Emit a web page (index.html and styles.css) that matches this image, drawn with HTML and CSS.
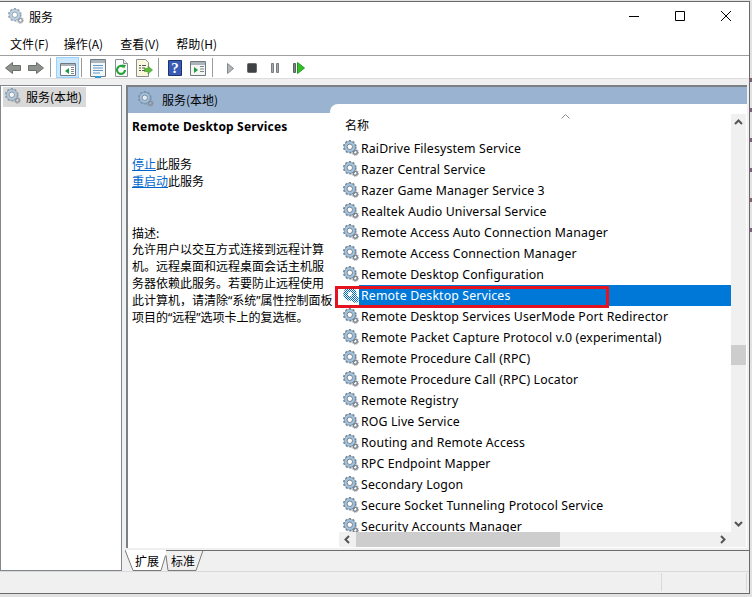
FILE: index.html
```html
<!DOCTYPE html>
<html lang="zh">
<head>
<meta charset="utf-8">
<title>服务</title>
<link rel="stylesheet" href="styles.css">
</head>
<body>
<svg class="defs" width="0" height="0" aria-hidden="true">
  <defs>
    <pattern id="dither" width="2" height="2" patternUnits="userSpaceOnUse">
      <rect width="2" height="2" fill="#ffffff"/>
      <rect width="1" height="1" fill="#0068c4"/>
      <rect x="1" y="1" width="1" height="1" fill="#0068c4"/>
    </pattern>
    <symbol id="gear" viewBox="0 0 16 16">
      <g fill="none">
        <circle cx="12.300" cy="12.300" r="2" stroke="#7f868e" stroke-width="1.500"/>
        <circle cx="12.300" cy="12.300" r="3.200" stroke="#8f959c" stroke-width="1" stroke-dasharray="1.200 1.200"/>
        <circle cx="6.800" cy="6.800" r="6" stroke="#6f8599" stroke-width="1.600" stroke-dasharray="2.100 1.700"/>
        <circle cx="6.800" cy="6.800" r="4.100" fill="#fff" stroke="#a4c3de" stroke-width="2.600"/>
        <circle cx="6.800" cy="6.800" r="5.500" stroke="#6f8599" stroke-width=".7"/>
        <circle cx="6.800" cy="6.800" r="2.700" stroke="#5a6875" stroke-width=".8"/>
      </g>
    </symbol>
    <symbol id="gear-selected" viewBox="0 0 16 16">
      <circle cx="7" cy="7" r="6.800" fill="url(#dither)"/>
      <circle cx="12.300" cy="12.300" r="3.400" fill="url(#dither)"/>
      <circle cx="7" cy="7" r="2.200" fill="#fff"/>
    </symbol>
  </defs>
</svg>
<div class="window">
  <header class="titlebar">
    <svg class="icon16 pale"><use href="#gear"/></svg>
    <span class="title">服务</span>
    <div class="caption">
      <svg class="cap-btn" viewBox="0 2 46 30"><path d="M18 16.500h10" stroke="#000" fill="none"/></svg>
      <svg class="cap-btn" viewBox="0 2 46 30"><path d="M18.500 11.500h9v9h-9z" stroke="#000" fill="none"/></svg>
      <svg class="cap-btn" viewBox="0 2 46 30"><path d="M18 11l10 10M28 11l-10 10" stroke="#000" fill="none"/></svg>
    </div>
  </header>
  <nav class="menubar">
    <span>文件(F)</span><span>操作(A)</span><span>查看(V)</span><span>帮助(H)</span>
  </nav>
  <div class="toolbar">
    <svg class="tool" viewBox="0 -1 23 22"><path d="M3.500 11l7-5.500v3h8v5h-8v3z" fill="#8f938f" stroke="#6b6f6b"/></svg>
    <svg class="tool" viewBox="0 -1 23 22"><path d="M18.500 11l-7-5.500v3h-8v5h8v3z" fill="#8f938f" stroke="#6b6f6b"/></svg>
    <i class="sep"></i>
    <span class="tool-on">
      <svg class="tool-inner" viewBox="0 0 21 20"><path d="M3.500 5.500h15v12h-15z" fill="#fff" stroke="#6f7a80"/><path d="M4 6h14v2H4z" fill="#aab4ba"/><path d="M14 9.500h3M14 11.500h3M14 13.500h3M14 15.500h3" stroke="#7d868c"/><path d="M12 10v6l-4-3z" fill="#1f9a3a"/></svg>
    </span>
    <i class="sep"></i>
    <svg class="tool" viewBox="0 -1 23 22"><path d="M3.500 2.500h15v17h-15z" fill="#f4f6f8" stroke="#6f7a80"/><path d="M4 3h14v3H4z" fill="#aab4ba"/><path d="M6 8.500h10M6 11h10M6 13.500h10M6 16h7" stroke="#5f9ac9"/><path d="M8 20h6" stroke="#2a9ad8" stroke-width="2"/></svg>
    <svg class="tool" viewBox="0 -1 23 22"><path d="M5.500 2.500h8l4 4v13h-12z" fill="#fafafa" stroke="#8a8f94"/><path d="M13.500 2.500v4h4" fill="#e8e8e8" stroke="#8a8f94"/><path d="M15 13a4 4 0 1 1-1.500-3.200" fill="none" stroke="#26a33c" stroke-width="2.200"/><path d="M12 7.500l4 .5-2 3.500z" fill="#26a33c"/></svg>
    <svg class="tool" viewBox="0 -1 23 22"><path d="M3.500 2.500h9l3 3v14h-12z" fill="#fbf7dc" stroke="#8a8f94"/><path d="M6 8.500h2M6 11h2M6 13.500h2M9 8.500h4M9 11h3M9 13.500h3" stroke="#50565c"/><path d="M11.500 11.500h3.500V9l4.500 4-4.500 4v-2.500h-3.500z" fill="#5dbb3b" stroke="#3c8f24" stroke-width=".6"/></svg>
    <i class="sep"></i>
    <svg class="tool" viewBox="0 -1 23 22"><path d="M4.500 3.500h13v15h-13z" fill="#3a5bb5" stroke="#1e326f"/><text x="11" y="16" class="help-mark">?</text></svg>
    <svg class="tool" viewBox="0 -1 23 22"><path d="M3.500 4.500h15v14h-15z" fill="#f3f6f2" stroke="#6f7a80"/><path d="M4 5h14v3H4z" fill="#aab4ba"/><path d="M13 9.500h4M13 12h4M13 14.500h4" stroke="#7d868c"/><path d="M7 10v6l4-3z" fill="#1f9a3a"/></svg>
    <i class="sep"></i>
    <svg class="tool" viewBox="0 -1 23 22"><path d="M9.500 6.500v10l6-5z" fill="#b4b7b9" stroke="#85898c"/></svg>
    <svg class="tool" viewBox="0 -1 23 22"><rect x="6.500" y="6.500" width="9" height="9" rx="1" fill="#3f4143" stroke="#67696b"/></svg>
    <svg class="tool" viewBox="0 -1 23 22"><path d="M7.500 6.500h2v9h-2zM12.500 6.500h2v9h-2z" fill="#a6a9ab" stroke="#7b7e80"/></svg>
    <svg class="tool" viewBox="0 -1 23 22"><path d="M6.500 6.500h2v9h-2z" fill="#7f8386" stroke="#5c6062"/><path d="M10.500 5.500v11l7-5.500z" fill="#35c02a" stroke="#209a1c"/></svg>
  </div>

  <main class="workspace">
    <aside class="tree">
      <div class="tree-item">
        <svg class="icon16 pale"><use href="#gear"/></svg>
        <span>服务(本地)</span>
      </div>
    </aside>
    <section class="panel">
      <div class="panel-body">
        <div class="panel-head">
          <svg class="icon16 pale"><use href="#gear"/></svg>
          <span>服务(本地)</span>
        </div>
        <div class="panel-split">
          <div class="details">
            <h2>Remote Desktop Services</h2>
            <p class="actions"><a href="#">停止</a>此服务<br><a href="#">重启动</a>此服务</p>
            <p class="desc-label">描述:</p>
            <p class="desc">允许用户以交互方式连接到远程计算机。远程桌面和远程桌面会话主机服务器依赖此服务。若要防止远程使用此计算机，请清除“系统”属性控制面板项目的“远程”选项卡上的复选框。</p>
          </div>
          <div class="listview">
            <div class="list-main">
              <div class="list-head">
                <span class="col-name">名称</span>
                <svg class="sort" viewBox="0 0 9 5"><path d="M.5 4.500l4-4 4 4" fill="none" stroke="#8c8c8c"/></svg>
              </div>
              <ul class="rows">
                <li><svg class="icon16"><use href="#gear"/></svg><span>RaiDrive Filesystem Service</span></li>
                <li><svg class="icon16"><use href="#gear"/></svg><span>Razer Central Service</span></li>
                <li><svg class="icon16"><use href="#gear"/></svg><span>Razer Game Manager Service 3</span></li>
                <li><svg class="icon16"><use href="#gear"/></svg><span>Realtek Audio Universal Service</span></li>
                <li><svg class="icon16"><use href="#gear"/></svg><span>Remote Access Auto Connection Manager</span></li>
                <li><svg class="icon16"><use href="#gear"/></svg><span>Remote Access Connection Manager</span></li>
                <li><svg class="icon16"><use href="#gear"/></svg><span>Remote Desktop Configuration</span></li>
                <li class="selected"><svg class="icon16"><use href="#gear-selected"/></svg><span>Remote Desktop Services</span><i class="callout"></i></li>
                <li><svg class="icon16"><use href="#gear"/></svg><span>Remote Desktop Services UserMode Port Redirector</span></li>
                <li><svg class="icon16"><use href="#gear"/></svg><span>Remote Packet Capture Protocol v.0 (experimental)</span></li>
                <li><svg class="icon16"><use href="#gear"/></svg><span>Remote Procedure Call (RPC)</span></li>
                <li><svg class="icon16"><use href="#gear"/></svg><span>Remote Procedure Call (RPC) Locator</span></li>
                <li><svg class="icon16"><use href="#gear"/></svg><span>Remote Registry</span></li>
                <li><svg class="icon16"><use href="#gear"/></svg><span>ROG Live Service</span></li>
                <li><svg class="icon16"><use href="#gear"/></svg><span>Routing and Remote Access</span></li>
                <li><svg class="icon16"><use href="#gear"/></svg><span>RPC Endpoint Mapper</span></li>
                <li><svg class="icon16"><use href="#gear"/></svg><span>Secondary Logon</span></li>
                <li><svg class="icon16"><use href="#gear"/></svg><span>Secure Socket Tunneling Protocol Service</span></li>
                <li><svg class="icon16"><use href="#gear"/></svg><span>Security Accounts Manager</span></li>
              </ul>
              <div class="hscroll">
                <svg class="arrow" viewBox="0 0 17 15"><path d="M10 4l-3.500 3.500L10 11" fill="none" stroke="#555" stroke-width="2"/></svg>
                <div class="hthumb"></div>
                <svg class="arrow arrow-end" viewBox="0 0 17 15"><path d="M7 4l3.500 3.500L7 11" fill="none" stroke="#555" stroke-width="2"/></svg>
              </div>
            </div>
            <div class="vscroll">
              <svg class="arrow" viewBox="0 0 15 17"><path d="M4 10l3.500-3.500L11 10" fill="none" stroke="#555" stroke-width="2"/></svg>
              <div class="vthumb"></div>
              <svg class="arrow arrow-end" viewBox="0 0 15 17"><path d="M4 7l3.500 3.500L11 7" fill="none" stroke="#555" stroke-width="2"/></svg>
            </div>
          </div>
        </div>
      </div>
      <div class="tabs">
        <svg class="tab-shapes" viewBox="0 0 82 21">
          <path d="M0 0l8 20.500h28l5-16L41 0z" fill="#fff"/>
          <path d="M0 0l8 20.500h28l4.500-15M41 5.500l2 15h28l7-20" fill="none" stroke="#7a7a7a"/>
        </svg>
        <span class="tab">扩展</span>
        <span class="tab">标准</span>
      </div>
    </section>
  </main>
  <footer class="statusbar">
    <i></i><i></i>
  </footer>
</div>
</body>
</html>
```
FILE: styles.css
```css
* { box-sizing: border-box; }
html, body { margin: 0; height: 100%; }
body {
  width: 752px;
  height: 597px;
  overflow: hidden;
  background: repeating-linear-gradient(transparent 0 8px, #7d6078 8px 12px, transparent 12px 30px) right 70px / 2px 180px no-repeat, #e2e2e2;
  padding-top: 1px;
  font-family: "Noto Sans CJK SC", sans-serif;
  font-size: 12px;
  color: #000;
}
.defs { display: block; height: 0; }
.icon16 { width: 16px; height: 16px; flex: none; display: block; }
.pale { opacity: .75; }

.window {
  width: 750px;
  height: 593px;
  background: #f0f0f0;
  border: 1px solid #6a6a6a;
  border-left: 0;
  display: flex;
  flex-direction: column;
}
.titlebar {
  height: 30px;
  background: #fff;
  display: flex;
  align-items: center;
  padding: 0 0 2px 8px;
  flex: none;
}
.title { margin-left: 5px; }
.caption { margin-left: auto; display: flex; margin-top: 2px; }
.cap-btn { width: 46px; height: 30px; display: block; }
.menubar {
  height: 24px;
  background: #fff;
  display: flex;
  align-items: center;
  gap: 17px;
  padding-left: 10px;
  flex: none;
  border-bottom: 1px solid #a0a0a0;
}
.menubar span:first-child { margin-right: -2px; }
.toolbar {
  height: 23px;
  background: #fff;
  border-bottom: 1px solid #dcdcdc;
  display: flex;
  align-items: center;
  padding-left: 2px;
  flex: none;
}
.tool { width: 23px; height: 22px; display: block; flex: none; }
.tool-inner { width: 21px; height: 20px; display: block; flex: none; }
.sep { width: 1px; height: 19px; background: #9a9a9a; margin: 0 5px 0 2px; flex: none; }
.tool-on {
  width: 23px;
  height: 21px;
  align-self: flex-end;
  background: #cce8ff;
  border: 1px solid #99d1ff;
  display: flex;
  flex: none;
}
.help-mark { font: bold 15px "Liberation Serif", serif; fill: #fff; text-anchor: middle; }

.workspace {
  flex: 1;
  min-height: 0;
  display: flex;
  gap: 4px;
  padding-top: 6px;
}
.tree {
  width: 122px;
  flex: none;
  background: #fff;
  border: 1px solid #82878f;
  padding: 1px 2px;
}
.tree-item {
  height: 20px;
  width: 83px;
  background: #d9d9d9;
  display: flex;
  align-items: center;
  gap: 5px;
  padding: 0 0 2px 2px;
}
.panel {
  flex: 1;
  min-width: 0;
  display: flex;
  flex-direction: column;
}
.panel-body {
  flex: 1;
  min-height: 0;
  background: #fff;
  border: 2px solid #7c7f83;
  border-width: 2px 0 0 2px;
  margin-right: 2px;
  display: flex;
  flex-direction: column;
}
.panel-head {
  height: 26px;
  background: #9ab3d0;
  display: flex;
  align-items: flex-start;
  gap: 8px;
  padding: 4px 0 0 10px;
  flex: none;
}
.panel-split {
  flex: 1;
  min-height: 0;
  display: flex;
}
.details {
  width: 202px;
  flex: none;
  padding: 5px 0 0 4px;
  line-height: 17px;
  position: relative;
  z-index: 1;
}
.details h2 {
  margin: 0;
  font: bold 12px/17px "Noto Sans", "Noto Sans CJK SC", sans-serif;
  letter-spacing: .17px;
  white-space: nowrap;
}
.details p { margin: 0; }
.details .actions { margin-top: 20px; }
.actions a { color: #0066cc; }
.details .desc-label { margin-top: 35px; }
.desc { width: 203px; font-family: "Noto Sans", "Noto Sans CJK SC", sans-serif; }
.listview {
  flex: 1;
  min-width: 0;
  margin-top: -9px;
  background: #fff;
  border-top-left-radius: 8px;
  display: flex;
  padding-bottom: 1px;
}
.list-main {
  flex: 1;
  min-width: 0;
  display: flex;
  flex-direction: column;
  padding-left: 9px;
}
.list-head {
  height: 34px;
  flex: none;
  display: flex;
  position: relative;
  padding: 12px 0 0 6px;
  line-height: 17px;
}
.sort { width: 9px; height: 5px; position: absolute; left: 222px; top: 10px; }
.rows {
  list-style: none;
  margin: 0;
  padding: 0;
  flex: 1;
  min-height: 0;
  clip-path: inset(0 0 0 -10px);
  font-family: "Noto Sans", sans-serif;
  font-size: 12.300px;
  letter-spacing: .15px;
}
.rows li {
  height: 21px;
  display: flex;
  align-items: flex-start;
  padding-left: 4px;
  position: relative;
  white-space: nowrap;
}
.rows li .icon16 { margin-top: 2px; }
.rows li span { padding-left: 2px; height: 21px; line-height: 22px; flex: 1; }
.rows .selected span { background: #0078d7; color: #fff; }
.callout {
  position: absolute;
  left: -4px;
  top: 1px;
  width: 274px;
  height: 22px;
  border: 3px solid #e5121f;
}
.vscroll {
  width: 15px;
  margin: 10px 1px 0 0;
  padding-bottom: 15px;
  background: #f0f0f0;
  flex: none;
  display: flex;
  flex-direction: column;
}
.arrow { display: block; width: 15px; height: 17px; flex: none; }
.arrow-end { margin-top: auto; }
.vthumb { height: 20px; width: 15px; background: #cdcdcd; margin-top: 214px; }
.hscroll {
  height: 15px;
  background: #f0f0f0;
  display: flex;
  flex: none;
}
.hscroll .arrow { width: 17px; height: 15px; }
.hscroll .arrow-end { margin-top: 0; margin-left: auto; }
.hthumb { width: 204px; background: #cdcdcd; }

.tabs {
  height: 21px;
  flex: none;
  border-top: 1px solid #6d6d6d;
  display: flex;
  position: relative;
  margin-top: 2px;
  padding-left: 9px;
  gap: 12px;
}
.tab-shapes { position: absolute; left: -1px; top: -1px; width: 82px; height: 21px; }
.tab { position: relative; line-height: 20px; }
.statusbar {
  height: 22px;
  flex: none;
  border-top: 1px solid #d9d9d9;
  display: flex;
  justify-content: flex-end;
  gap: 84px;
  padding: 1px 2px 2px 0;
}
.statusbar i { width: 1px; background: #d9d9d9; }
```
